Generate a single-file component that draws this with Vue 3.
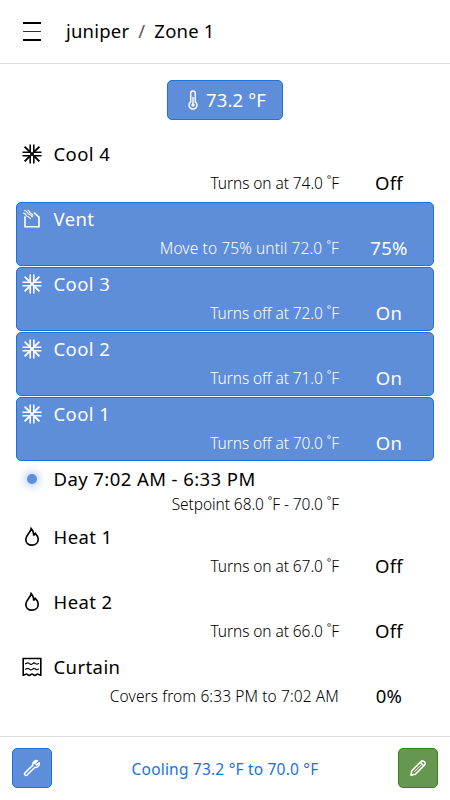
<template>
  <div class="page">
    <header class="header">
      <button class="menu" aria-label="Menu">
        <svg width="20" height="20" viewBox="0 0 20 20">
          <path d="M1 1h18M1 18h18" stroke="#000" stroke-width="2" />
          <path d="M1 9.5h18" stroke="#333" stroke-width="1" />
        </svg>
      </button>
      <nav class="crumbs">
        <span class="site">juniper</span>
        <span class="slash">/</span>
        <span class="zone">Zone 1</span>
      </nav>
    </header>

    <main class="content">
      <button class="reading">
        <svg width="12" height="20" viewBox="0 0 12 20" fill="none" stroke="currentColor">
          <path d="M3.7 11.8V3.3a2.3 2.3 0 0 1 4.6 0v8.5a4 4 0 1 1-4.6 0Z" stroke-width="1.5" />
          <path d="M6 7v7" stroke-width="1.4" />
          <circle cx="6" cy="15" r="1.7" fill="currentColor" stroke="none" />
        </svg>
        <span class="degrees">73.2 °F</span>
      </button>

      <div class="stages">
        <div
          v-for="stage in stages"
          :key="stage.name"
          class="stage"
          :class="[stage.icon, { active: stage.active }]"
        >
          <div class="icon">
            <svg v-if="stage.icon === 'cool'" width="20" height="20" viewBox="0 0 20 20" fill="none" stroke="currentColor" stroke-width="1.6">
              <path d="M8.2 .5v7.7H.5M11.8 .5v7.7h7.7M8.2 19.5v-7.7H.5M11.8 19.5v-7.7h7.7" />
              <path d="M2.6 2.6l14.8 14.8M17.4 2.6L2.6 17.4" stroke-width="1.9" />
            </svg>
            <svg v-else-if="stage.icon === 'vent'" width="20" height="20" viewBox="0 0 20 20" fill="none" stroke="currentColor">
              <path d="M3 7.2v10.6h14V8.2l-5.2-4.7" stroke-width="1.6" />
              <path d="M1.2 4.2c3 .2 2.3 3.2 5.4 3.8 1.2.3 1.4 1.2 2.3 1.8M2.2 1.5c3.5.1 2.4 3.3 5.5 4 1.5.4 1.7 1.6 3 2.4M5.5 1c2.2.6 1.5 2.6 3.6 3.5 1.3.5 1.2 1.4 2.2 2" stroke-width="1.2" />
            </svg>
            <svg v-else-if="stage.icon === 'heat'" width="20" height="20" viewBox="0 0 20 20" fill="none" stroke="currentColor" stroke-width="1.7" stroke-linejoin="miter">
              <path d="M9.2 1.6C8.7 5.4 3.8 8 3.8 12.2c0 3.6 2.6 6 6.2 6s6.2-2.5 6.2-6c0-2.5-1.4-4.4-2.9-5.9L11.6 8.6C12 5.6 10.8 3.4 9.2 1.6Z" />
            </svg>
            <svg v-else-if="stage.icon === 'curtain'" width="20" height="20" viewBox="0 0 20 20" fill="none" stroke="currentColor">
              <path d="M1.2 1.5h17.6v16.8c-1.6-.1-2-1.3-3.2-1.3-1.1 0-1.5 1.4-2.8 1.4S11.1 17 10 17s-1.5 1.4-2.8 1.4S5.5 17 4.4 17c-1.2 0-1.6 1.2-3.2 1.3Z" stroke-width="1.6" />
              <path d="M3 6.8c1.5 0 1.8-.9 3-.9s1.5 1.5 3 1.5 1.8-1.5 3-1.5 1.6 1.3 2.8 1.3 1.3-.7 2.2-.7M3 12.3c1.5 0 1.8-.9 3-.9s1.5 1.5 3 1.5 1.8-1.5 3-1.5 1.6 1.3 2.8 1.3 1.3-.7 2.2-.7" stroke-width="1.1" />
            </svg>
            <span v-else class="dot"></span>
          </div>
          <div class="name">{{ stage.name }}</div>
          <div class="detail">{{ stage.detail }}</div>
          <div class="value">{{ stage.value }}</div>
        </div>
      </div>
    </main>

    <footer class="footer">
      <button class="tool" aria-label="Settings">
        <svg width="20" height="20" viewBox="0 0 20 20" fill="none" stroke="currentColor" stroke-width="1.5" stroke-linejoin="round">
          <path d="M15.5 2.8c-2.6-.8-5.2 1.5-4.6 4.3L3 14.9c-1.4 1.5.6 3.5 2.1 2.1l7.8-7.7c2.6.7 4.9-1.8 4.2-4.5L14.8 7l-2-1.9Z" />
        </svg>
      </button>
      <span class="status">Cooling 73.2 °F to 70.0 °F</span>
      <button class="tool edit" aria-label="Edit">
        <svg width="20" height="20" viewBox="0 0 20 20" fill="none" stroke="currentColor" stroke-width="1.6" stroke-linejoin="round">
          <path d="M3 17.2l.8-4.5 9.3-9.2c2-2 5.4 1.5 3.5 3.5l-9.2 9.2Z" />
          <path d="M6.3 13.9l7-7" stroke-width="1" />
          <path d="M12.5 4.5l3.2 3.2" />
        </svg>
      </button>
    </footer>
  </div>
</template>

<script setup>
import { ref } from 'vue';

const stages = ref([
  { name: 'Cool 4', icon: 'cool', detail: 'Turns on at 74.0 ˚F', value: 'Off' },
  { name: 'Vent', icon: 'vent', detail: 'Move to 75% until 72.0 ˚F', value: '75%', active: true },
  { name: 'Cool 3', icon: 'cool', detail: 'Turns off at 72.0 ˚F', value: 'On', active: true },
  { name: 'Cool 2', icon: 'cool', detail: 'Turns off at 71.0 ˚F', value: 'On', active: true },
  { name: 'Cool 1', icon: 'cool', detail: 'Turns off at 70.0 ˚F', value: 'On', active: true },
  { name: 'Day 7:02 AM - 6:33 PM', icon: 'day', detail: 'Setpoint 68.0 ˚F - 70.0 ˚F', value: '' },
  { name: 'Heat 1', icon: 'heat', detail: 'Turns on at 67.0 ˚F', value: 'Off' },
  { name: 'Heat 2', icon: 'heat', detail: 'Turns on at 66.0 ˚F', value: 'Off' },
  { name: 'Curtain', icon: 'curtain', detail: 'Covers from 6:33 PM to 7:02 AM', value: '0%' }
]);
</script>

<style>
body {
  margin: 0;
  background: #fff;
}
</style>

<style scoped>
.page {
  display: flex;
  flex-direction: column;
  height: 800px;
  overflow: hidden;
  font-family: "Noto Sans", "Open Sans", sans-serif;
  font-size: 18.5px;
  color: #000;
}

button {
  padding: 0;
  font: inherit;
  cursor: pointer;
}

svg {
  display: block;
}

.header {
  display: flex;
  align-items: center;
  box-sizing: border-box;
  height: 64px;
  padding-left: 22px;
  border-bottom: 1px solid #ddd;
}

.menu {
  border: none;
  background: none;
}

.crumbs {
  display: flex;
  gap: 9px;
  margin-left: 24px;
  padding-bottom: 1px;
  letter-spacing: 0.2px;
  line-height: 24px;
}

.slash {
  color: #555;
}

.content {
  flex: 1;
  display: flex;
  flex-direction: column;
  align-items: center;
  padding: 16px 16px 0;
}

.reading {
  display: flex;
  align-items: center;
  justify-content: center;
  gap: 7px;
  box-sizing: border-box;
  width: 116px;
  height: 40px;
  padding-left: 3px;
  border: 1px solid #1a73d9;
  border-radius: 5px;
  background: #5e8dd9;
  color: #fff;
}

.degrees {
  padding-bottom: 1px;
  letter-spacing: 0.15px;
}

.stages {
  display: flex;
  flex-direction: column;
  gap: 1px;
  width: 100%;
  margin-top: 17px;
}

.stage {
  display: grid;
  grid-template-columns: 36px 1fr 94px;
  grid-template-rows: 33px 1fr;
  box-sizing: border-box;
  height: 64px;
  border: 1px solid transparent;
  border-radius: 5px;
}

.stage.active {
  border-color: #1a73d9;
  background: #5e8dd9;
  color: #fff;
}

.stage.day {
  height: 57px;
}

.icon {
  display: flex;
  align-items: center;
  padding: 0 0 1px 5px;
}

.dot {
  width: 10px;
  height: 10px;
  margin-left: 5px;
  border-radius: 50%;
  background: #5e8dd9;
  box-shadow: 0 0 8px 3px #c3d5f5;
}

.name {
  grid-column: 2 / 4;
  padding-left: 0.5px;
  letter-spacing: 0.42px;
  line-height: 32px;
}

.detail {
  grid-column: 1 / 3;
  font-size: 15.5px;
  font-weight: 300;
  letter-spacing: -0.08px;
  line-height: 24px;
  text-align: right;
  white-space: nowrap;
}

.vent .detail,
.curtain .detail {
  letter-spacing: 0.1px;
}

.day .detail {
  margin-top: -4px;
}

.value {
  padding-left: 6px;
  letter-spacing: 0.3px;
  line-height: 24px;
  text-align: center;
}

.footer {
  display: flex;
  align-items: center;
  justify-content: space-between;
  box-sizing: border-box;
  height: 64px;
  padding: 0 12px 1px;
  border-top: 1px solid #ddd;
}

.tool {
  display: flex;
  align-items: center;
  justify-content: center;
  box-sizing: border-box;
  width: 40px;
  height: 40px;
  border: 1px solid #1a73d9;
  border-radius: 5px;
  background: #5e8dd9;
  color: #fff;
}

.tool.edit {
  border-color: #388412;
  background: #659750;
}

.status {
  padding-top: 1px;
  font-size: 15.5px;
  letter-spacing: 0.2px;
  color: #1a73d9;
}
</style>
